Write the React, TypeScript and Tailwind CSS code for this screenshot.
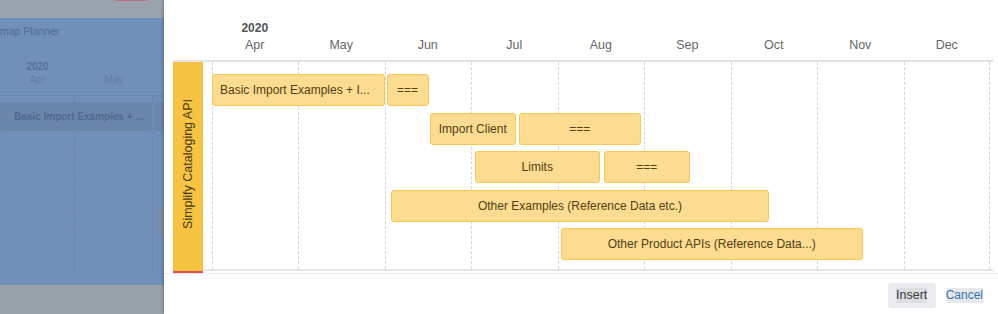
import React from "react";

type Bar = { l: number; w: number; t: string; left?: boolean };

const rows: Bar[][] = [
  [
    { l: 9, w: 172.5, t: "Basic Import Examples + I...", left: true },
    { l: 183.5, w: 42, t: "===" },
  ],
  [
    { l: 226.5, w: 86.5, t: "Import Client" },
    { l: 315.5, w: 122.5, t: "===" },
  ],
  [
    { l: 271.5, w: 125.5, t: "Limits" },
    { l: 401, w: 85.5, t: "===" },
  ],
  [{ l: 188, w: 378, t: "Other Examples (Reference Data etc.)" }],
  [{ l: 357.5, w: 302.5, t: "Other Product APIs (Reference Data...)" }],
];

const months = ["Apr", "May", "Jun", "Jul", "Aug", "Sep", "Oct", "Nov", "Dec"];

function Backdrop() {
  return (
    <div className="w-[164px] shrink-0 h-full flex flex-col overflow-hidden">
      <div className="h-[18px] bg-[#9aa2ad] relative">
        <div className="absolute left-[115px] top-0 w-[32px] h-[1px] bg-[#b9707a]" />
      </div>
      <div className="h-[267px] bg-[#7190b9] flex flex-col">
        <div className="h-[26px] border-b border-[#6e8db6] flex items-center pt-[2px]">
          <span className="text-[10.5px] text-[#4d6c96] whitespace-nowrap">map Planner</span>
        </div>
        <div className="h-[52px] flex items-end border-b border-[#6786ae] pb-[9px]">
          <div className="w-[75px] flex flex-col items-center leading-[12px]">
            <span className="text-[10px] font-bold text-[#56739b]">2020</span>
            <span className="text-[10px] text-[#5f7ca4] mt-[1px]">Apr</span>
          </div>
          <div className="w-[78px] flex flex-col items-center leading-[12px]">
            <span className="text-[10px] text-[#5f7ca4]">May</span>
          </div>
        </div>
        <div className="relative flex h-[174px]">
          <div className="w-[75px] h-full border-r border-dashed border-[#6483ac]" />
          <div className="w-[78px] h-full border-r border-dashed border-[#6483ac]" />
          <div className="absolute left-0 top-[6px] w-[152px] h-[29px] rounded-[2px] bg-[#6b86ab] flex items-center pl-[14px]">
            <span className="text-[10px] font-bold text-[#4f6a8f] whitespace-nowrap">Basic Import Examples + ...</span>
          </div>
          <div className="absolute left-[154px] top-[6px] w-[12px] h-[29px] rounded-[2px] bg-[#6b86ab]" />
          <div className="absolute left-[158px] top-[111px] w-[6px] h-[29px] bg-[#7a8ea9]" />
        </div>
        <div className="flex-1" />
      </div>
      <div className="flex-1 bg-[#99a1ab]" />
    </div>
  );
}

export default function App() {
  return (
    <div className="w-[998px] h-[314px] flex overflow-hidden font-['Liberation_Sans',Arial,sans-serif] bg-white">
      <Backdrop />
      <div className="relative flex-1 h-full bg-white flex flex-col shadow-[-1px_0_3px_rgba(0,0,0,0.25)]">
        <div className="pl-[9px] pr-[5px]">
          {/* header */}
          <div className="h-[62px] flex items-end border-b-2 border-[#e4e4e4] pb-[8px]">
            <div className="w-[38.5px] shrink-0" />
            {months.map((m, i) => (
              <div key={m} className="w-[86.5px] shrink-0 flex flex-col items-center leading-[14px]">
                {i === 0 && <span className="text-[12px] font-bold text-[#555555] mb-[3px]">2020</span>}
                <span className="text-[12.5px] text-[#666666]">{m}</span>
              </div>
            ))}
          </div>
          {/* body */}
          <div className="flex">
            <div className="w-[30px] shrink-0 flex flex-col">
              <div className="h-[209px] bg-[#f6c343] flex items-center justify-center pb-[6px]">
                <span className="[writing-mode:vertical-rl] rotate-180 text-[12.5px] text-[#4a3b10] whitespace-nowrap">
                  Simplify Cataloging API
                </span>
              </div>
              <div className="h-[2px] bg-[#d9534f]" />
            </div>
            <div className="relative flex-1 h-[209px] border-b-2 border-[#e6e6e6]">
              <div className="flex h-full">
                <div className="w-[8.5px] shrink-0" />
                {months.map((m, i) => (
                  <div
                    key={m}
                    className={
                      i === months.length - 1
                        ? "w-[86.5px] shrink-0 h-full border-l border-r border-dashed border-[#d6d6d6]"
                        : "w-[86.5px] shrink-0 h-full border-l border-dashed border-[#d6d6d6]"
                    }
                  />
                ))}
              </div>
              <div className="absolute inset-0 flex flex-col pt-[12px] gap-[6.5px]">
                {rows.map((row, ri) => (
                  <div key={ri} className="relative h-[32px]">
                    {row.map((b, bi) => (
                      <div
                        key={bi}
                        style={{ left: b.l, width: b.w }}
                        className={
                          b.left
                            ? "absolute top-0 h-[32px] rounded-[3px] border border-[#f4c853] bg-[#fbdc91] flex items-center pl-[7px] overflow-hidden whitespace-nowrap text-[12px] text-[#524014]"
                            : "absolute top-0 h-[32px] rounded-[3px] border border-[#f4c853] bg-[#fbdc91] flex items-center justify-center overflow-hidden whitespace-nowrap text-[12px] text-[#524014]"
                        }
                      >
                        {b.t}
                      </div>
                    ))}
                  </div>
                ))}
              </div>
            </div>
          </div>
        </div>
        {/* footer */}
        <div className="flex-1 border-t border-[#ececec] flex justify-end items-start pt-[9px] pr-[15px] gap-[10px]">
          <div className="w-[48px] h-[25px] rounded-[3px] bg-[#ebecf0] flex items-center justify-center">
            <span className="text-[12.5px] leading-[15px] text-[#333a44] bg-[#dcdee2]">Insert</span>
          </div>
          <div className="h-[25px] flex items-center">
            <span className="text-[12px] leading-[15px] text-[#3572b0] bg-[#e6e8eb]">Cancel</span>
          </div>
        </div>
      </div>
    </div>
  );
}
